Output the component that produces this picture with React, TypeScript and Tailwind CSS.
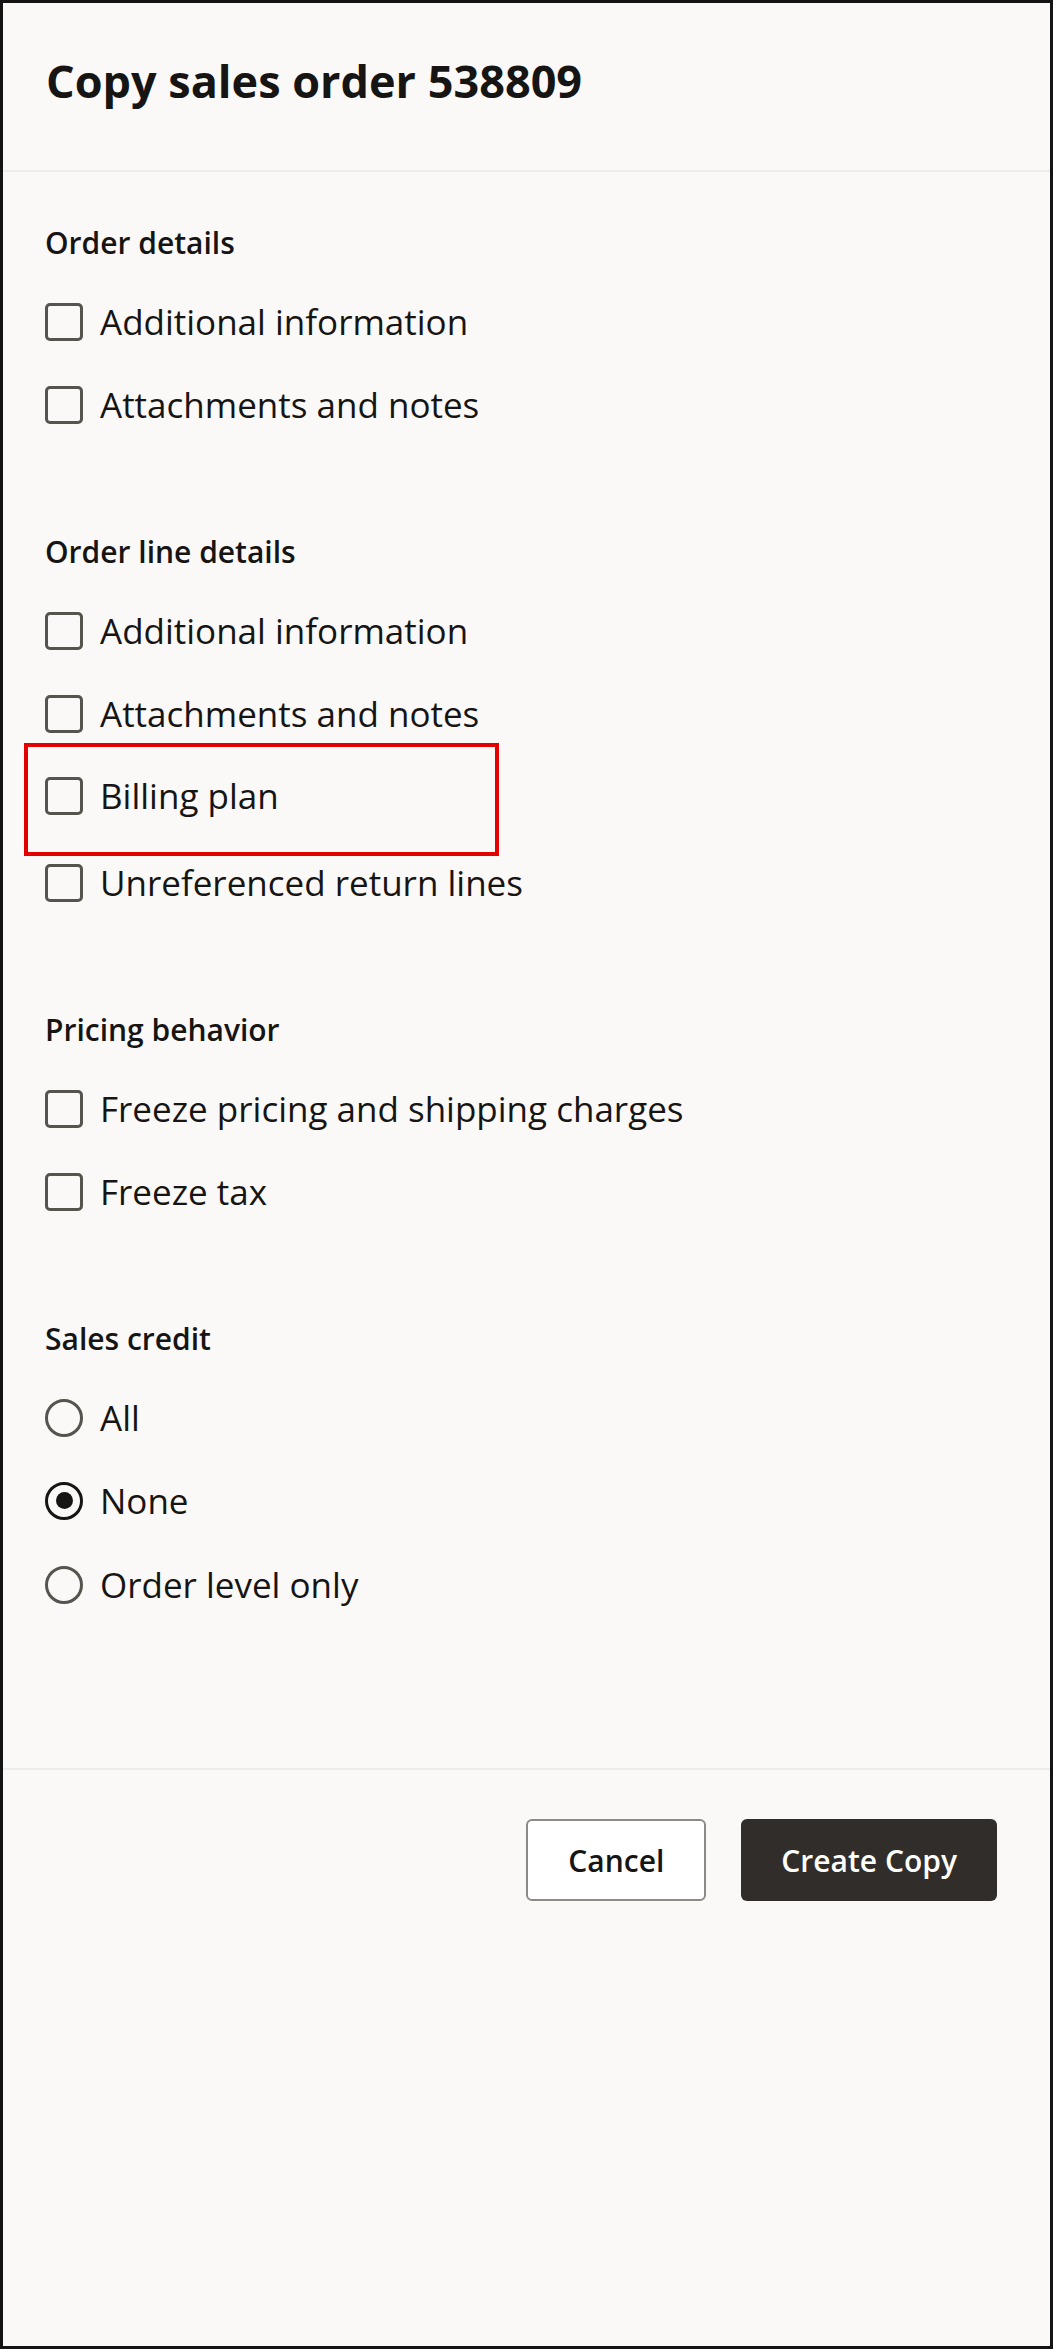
import { useState } from 'react';

type Item = {
  id: string;
  label: string;
  highlight?: boolean;
  pushDown?: boolean;
};

type Group = { title: string; items: Item[] };

const checkboxGroups: Group[] = [
  {
    title: 'Order details',
    items: [
      { id: 'order-info', label: 'Additional information' },
      { id: 'order-attachments', label: 'Attachments and notes' },
    ],
  },
  {
    title: 'Order line details',
    items: [
      { id: 'line-info', label: 'Additional information' },
      { id: 'line-attachments', label: 'Attachments and notes' },
      { id: 'billing-plan', label: 'Billing plan', highlight: true },
      { id: 'return-lines', label: 'Unreferenced return lines', pushDown: true },
    ],
  },
  {
    title: 'Pricing behavior',
    items: [
      { id: 'freeze-pricing', label: 'Freeze pricing and shipping charges' },
      { id: 'freeze-tax', label: 'Freeze tax' },
    ],
  },
];

const salesCreditOptions = [
  { id: 'all', label: 'All' },
  { id: 'none', label: 'None' },
  { id: 'order', label: 'Order level only' },
];

function SectionTitle({ children }: { children: string }) {
  return (
    <h3 className="mb-[18px] text-[30px] leading-[40px] font-semibold text-[#161513]">{children}</h3>
  );
}

function CheckboxRow({ item, checked, onToggle }: { item: Item; checked: boolean; onToggle: () => void }) {
  return (
    <label
      className={`relative flex h-[82.5px] cursor-pointer items-center gap-[17px] ${item.pushDown ? 'mt-[4px]' : ''}`}
    >
      <input type="checkbox" className="sr-only" checked={checked} onChange={onToggle} />
      <span className="flex h-[38px] w-[38px] shrink-0 items-center justify-center rounded-[5px] border-[3px] border-[#57534f]">
        {checked && (
          <svg viewBox="0 0 24 24" className="h-[26px] w-[26px]" fill="none" stroke="#161513" strokeWidth="3">
            <path d="M5 12.5l4.5 4.5L19 7.5" />
          </svg>
        )}
      </span>
      <span className="text-[35px] leading-[48px] text-[#161513]">{item.label}</span>
      {item.highlight && (
        <span className="pointer-events-none absolute -top-[12px] -left-[21px] h-[113px] w-[475px] border-4 border-[#e30000]" />
      )}
    </label>
  );
}

function RadioRow({ label, checked, last, onSelect }: { label: string; checked: boolean; last: boolean; onSelect: () => void }) {
  return (
    <label className={`flex h-[82.5px] cursor-pointer items-center gap-[17px] ${last ? 'mt-[2px]' : ''}`}>
      <input type="radio" name="sales-credit" className="sr-only" checked={checked} onChange={onSelect} />
      <span
        className={`flex h-[38px] w-[38px] shrink-0 items-center justify-center rounded-full border-[3px] ${
          checked ? 'border-[#161513]' : 'border-[#57534f]'
        }`}
      >
        {checked && <span className="h-[17px] w-[17px] rounded-full bg-[#161513]" />}
      </span>
      <span className="text-[35px] leading-[48px] text-[#161513]">{label}</span>
    </label>
  );
}

export default function App() {
  const [checked, setChecked] = useState<Record<string, boolean>>({});
  const [salesCredit, setSalesCredit] = useState('none');

  const toggle = (id: string) => setChecked(prev => ({ ...prev, [id]: !prev[id] }));

  return (
    <div className="flex h-[2349px] w-[1053px] flex-col border-[3px] border-[#141414] bg-[#fbf9f8] font-['Open_Sans',sans-serif] text-[#161513]">
      <header className="h-[169px] shrink-0 border-b-2 border-[#eeece9] pt-[51px] pl-[43px]">
        <h2 className="text-[45px] leading-[54px] font-bold">Copy sales order 538809</h2>
      </header>

      <div className="h-[1596px] shrink-0 pt-[51px] pl-[42px]">
        {checkboxGroups.map((group, i) => (
          <section key={group.title} className={i > 0 ? 'mt-[86px]' : ''}>
            <SectionTitle>{group.title}</SectionTitle>
            {group.items.map(item => (
              <CheckboxRow key={item.id} item={item} checked={!!checked[item.id]} onToggle={() => toggle(item.id)} />
            ))}
          </section>
        ))}

        <section className="mt-[86px]">
          <SectionTitle>Sales credit</SectionTitle>
          {salesCreditOptions.map((opt, i) => (
            <RadioRow
              key={opt.id}
              label={opt.label}
              checked={salesCredit === opt.id}
              last={i === salesCreditOptions.length - 1}
              onSelect={() => setSalesCredit(opt.id)}
            />
          ))}
        </section>
      </div>

      <footer className="flex shrink-0 justify-end gap-[35px] border-t-2 border-[#eeece9] pt-[49px] pr-[53px]">
        <button className="h-[82px] rounded-[6px] border-2 border-[#8c8a87] bg-white px-[40px] text-[30px] font-semibold text-[#161513]">
          Cancel
        </button>
        <button className="h-[82px] rounded-[6px] bg-[#312d2a] px-[40px] text-[30px] font-semibold text-white">
          Create Copy
        </button>
      </footer>
    </div>
  );
}
